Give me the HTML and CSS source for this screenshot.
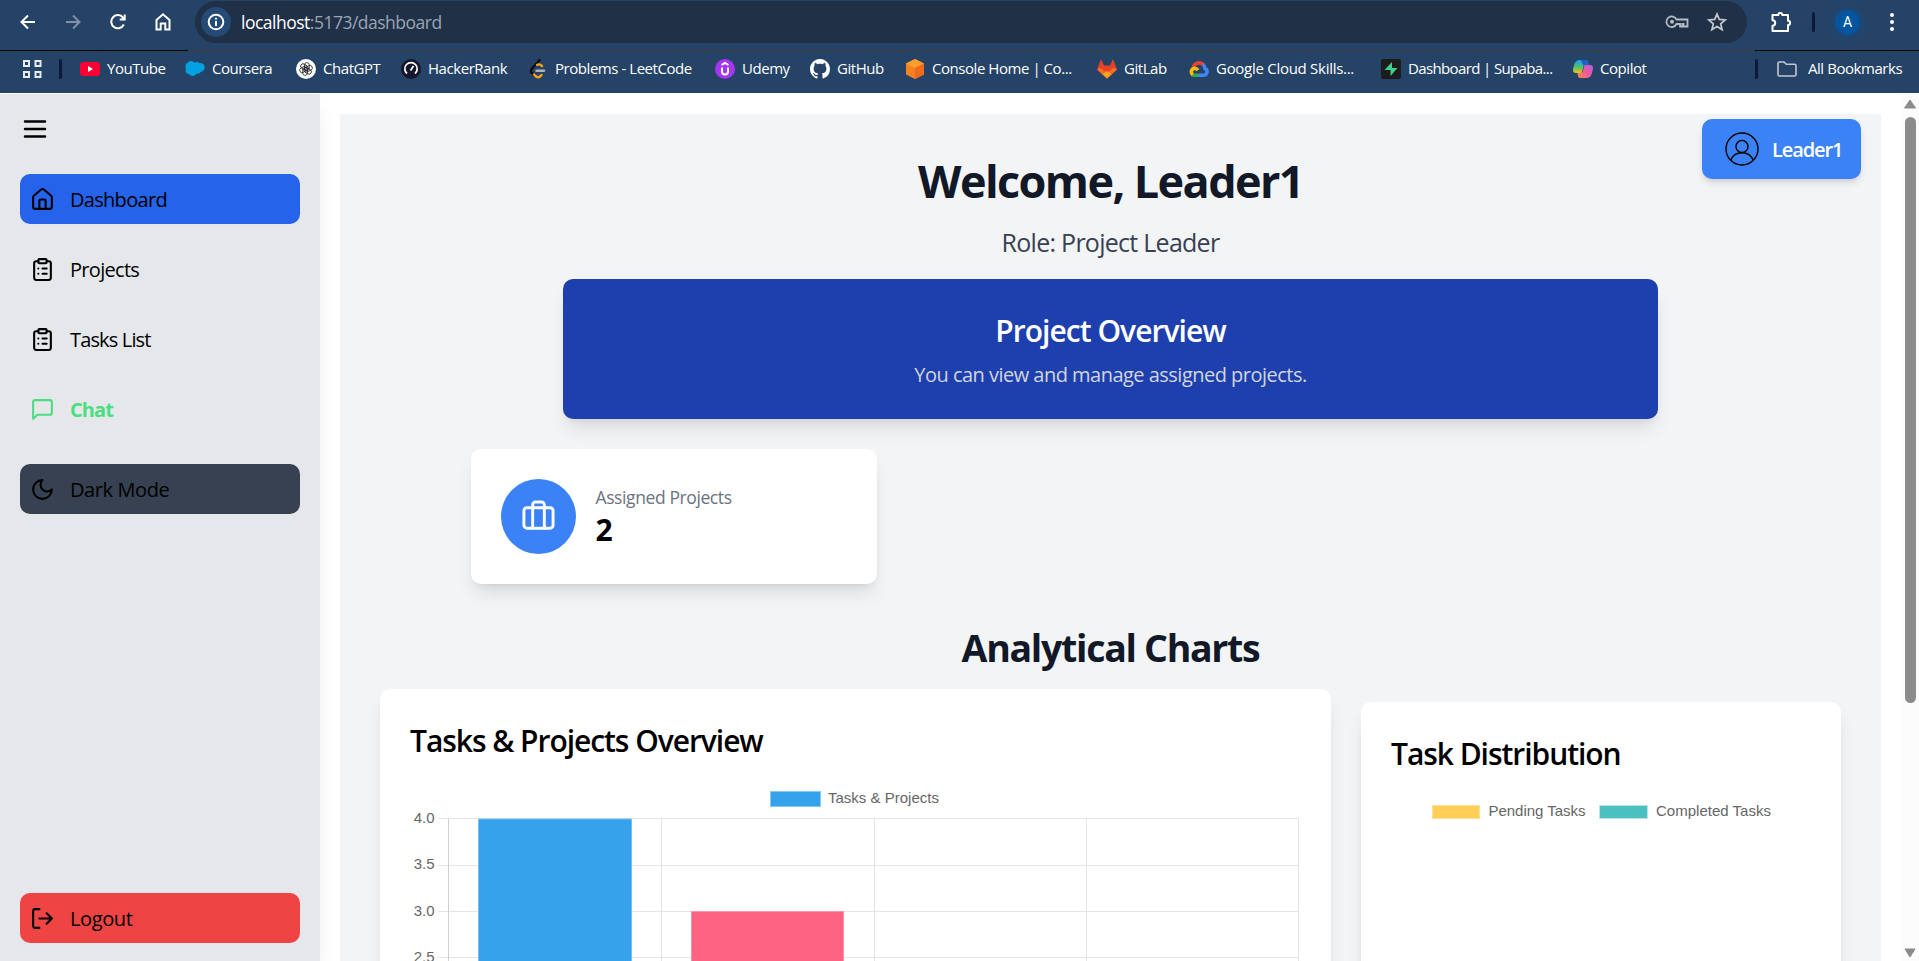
FILE: index.html
```html
<!DOCTYPE html>
<html lang="en">
<head>
<meta charset="utf-8">
<title>Dashboard</title>
<link rel="stylesheet" href="styles.css">
</head>
<body>
<header class="browser">
  <div class="toolbar">
    <div class="nav-icons">
      <svg width="20" height="20" viewBox="0 0 20 20" class="line white"><path d="M17 10H4M10 3.500L3.500 10l6.500 6.500"/></svg>
      <svg width="20" height="20" viewBox="0 0 20 20" class="line dim"><path d="M3 10h13M10 3.500L16.500 10 10 16.500"/></svg>
      <svg width="20" height="20" viewBox="0 0 20 20" class="line white"><path d="M15.800 12.500A6.600 6.600 0 1 1 15 5.600l1.500 1.600M16.700 2.500v5h-5"/></svg>
      <svg width="20" height="20" viewBox="0 0 20 20" class="line white"><path d="M3.500 8L10 2.300 16.500 8v9.500H12.300v-6H7.700v6H3.500z"/></svg>
    </div>
    <div class="omnibox">
      <span class="info"><svg width="20" height="20" viewBox="0 0 20 20" class="line white"><circle cx="10" cy="10" r="7.300"/><path d="M10 9v5M10 5.800v1.800"/></svg></span>
      <span class="url"><b>localhost</b>:5173/dashboard</span>
      <svg class="key" width="24" height="16" viewBox="0 0 24 16"><path d="M11.500 5.500A5.300 5.300 0 1 0 11.500 10H15v2.500h2.300V10h1.200v2.500H22.500V5.500z" fill="none" stroke="#b6bcc5" stroke-width="1.800"/><circle cx="7" cy="7.800" r="2" fill="#b6bcc5"/></svg>
      <svg width="20" height="20" viewBox="0 0 20 20"><path d="M10 2l2.300 5.400 5.900.5-4.500 3.900 1.400 5.800L10 14.500l-5.100 3.100 1.400-5.800L1.800 7.900l5.900-.5z" fill="none" stroke="#c3c7cd" stroke-width="1.700"/></svg>
    </div>
    <div class="tools">
      <svg width="24" height="24" viewBox="0 0 24 24" class="line white"><path d="M3.500 5h5.800a2 2 0 0 1 4 0H19v5.800a2 2 0 0 1 0 4.200v6H3.500v-5.300a2.700 2.700 0 0 0 0-5.400z" stroke-linejoin="round"/></svg>
      <i class="sep"></i>
      <span class="avatar">A</span>
      <svg width="8" height="20" viewBox="0 0 8 20" fill="#fff"><circle cx="4" cy="3" r="2"/><circle cx="4" cy="10" r="2"/><circle cx="4" cy="17" r="2"/></svg>
    </div>
  </div>
  <div class="edge"></div>
  <div class="bookmarks">
    <svg class="apps" width="20" height="20" viewBox="0 0 20 20" fill="none" stroke="#e6ebf2" stroke-width="2"><path d="M1 2h5v5H1zM12.500 2h5v5h-5zM1 13h5v5H1zM12.500 13h5v5h-5z"/></svg>
    <i class="sep"></i>
    <div class="marks">
      <a><svg viewBox="0 0 20 20"><rect y="3" width="20" height="14" rx="3.500" fill="#ff0033"/><path d="M8 7l5 3-5 3z" fill="#fff"/></svg><span>YouTube</span></a>
      <a><svg viewBox="0 0 20 20"><path d="M3 3.500a4.300 4.300 0 0 1 6.500.2 4.500 4.500 0 0 1 5 .3 4.400 4.400 0 1 1 1.500 8.800 4 4 0 0 1-4.500 1.700 4.300 4.300 0 0 1-7.300.8A3.600 3.600 0 0 1 1 10 4.500 4.500 0 0 1 3 3.500z" fill="#00a1e0"/></svg><span>Coursera</span></a>
      <a><svg viewBox="0 0 20 20"><circle cx="10" cy="10" r="10" fill="#fff"/><g fill="none" stroke="#222" stroke-width=".8"><rect x="8.500" y="3.600" width="4.800" height="8" rx="2.400"/><rect x="8.500" y="3.600" width="4.800" height="8" rx="2.400" transform="rotate(60 10 10)"/><rect x="8.500" y="3.600" width="4.800" height="8" rx="2.400" transform="rotate(120 10 10)"/><rect x="8.500" y="3.600" width="4.800" height="8" rx="2.400" transform="rotate(180 10 10)"/><rect x="8.500" y="3.600" width="4.800" height="8" rx="2.400" transform="rotate(240 10 10)"/><rect x="8.500" y="3.600" width="4.800" height="8" rx="2.400" transform="rotate(300 10 10)"/></g></svg><span>ChatGPT</span></a>
      <a><svg viewBox="0 0 20 20"><circle cx="10" cy="10" r="10" fill="#15182b"/><path d="M6 14.500a6.200 6.200 0 1 1 8 0M9.500 11.500l3-4.500" fill="none" stroke="#fff" stroke-width="1.700"/></svg><span>HackerRank</span></a>
      <a><svg viewBox="0 0 20 20" fill="none" stroke-width="2.400" stroke-linecap="round"><path d="M11.500 1.200L3.800 9.800q-1.600 2 0 4l2.200 2.300" stroke="#0a0a0a"/><path d="M9 5.800q3-1.300 5 1.200M6 15.500l2 2q3 2 5.500-1.500" stroke="#ffa116"/><path d="M8.500 11.700h7.500" stroke="#b3b3b3"/></svg><span>Problems - LeetCode</span></a>
      <a><svg viewBox="0 0 20 20"><circle cx="10" cy="10" r="10" fill="#a435f0"/><path d="M6.500 6L10 4l3.500 2M7 8.500v4a3 3 0 0 0 6 0v-4" fill="none" stroke="#fff" stroke-width="2"/></svg><span>Udemy</span></a>
      <a><svg viewBox="0 0 16 16"><path fill="#fff" d="M8 0C3.580 0 0 3.580 0 8c0 3.540 2.290 6.530 5.470 7.590.4.070.55-.17.55-.38 0-.19-.010-.820-.010-1.490-2.010.37-2.530-.49-2.690-.94-.090-.23-.48-.94-.82-1.130-.28-.15-.68-.52-.010-.53.63-.010 1.080.58 1.230.82.72 1.210 1.870.87 2.330.66.070-.52.28-.87.51-1.070-1.780-.2-3.640-.89-3.640-3.950 0-.87.31-1.590.82-2.150-.080-.2-.36-1.020.080-2.120 0 0 .67-.21 2.200.82.64-.18 1.320-.27 2-.27s1.360.090 2 .27c1.530-1.040 2.200-.82 2.200-.82.44 1.100.16 1.920.080 2.120.51.56.82 1.270.82 2.150 0 3.070-1.870 3.750-3.650 3.950.29.25.54.73.54 1.480 0 1.070-.010 1.930-.010 2.200 0 .21.15.46.55.38A8 8 0 0 0 16 8c0-4.420-3.580-8-8-8z"/></svg><span>GitHub</span></a>
      <a><svg viewBox="0 0 20 20"><path d="M10 0l9 4.500v11L10 20l-9-4.500v-11z" fill="#f58220"/><path d="M10 0l9 4.500L10 9 1 4.500z" fill="#ff9d2e"/><path d="M10 9l9-4.500v11L10 20z" fill="#ef6a1c"/></svg><span>Console Home | Co...</span></a>
      <a><svg viewBox="0 0 20 20"><path d="M4 0l3 6.500h6L16 0l4 10.500-10 9-10-9z" fill="#e24329"/><path d="M0 10.500l3-1.800L10 14l7-5.300 3 1.800-10 9z" fill="#fc6d26"/><path d="M5.500 15.200L10 12l4.500 3.200L10 19.500z" fill="#fca326"/></svg><span>GitLab</span></a>
      <a class="cloud"><svg viewBox="0 0 20 20" fill="none" stroke-width="3.600"><path d="M4.500 8A5.800 5.800 0 0 1 14.500 6" stroke="#ea4335"/><path d="M14 5.500q2 1.500 2 4.200a3.400 3.400 0 0 1-1 6.500H10" stroke="#4285f4"/><path d="M10 16.200H5.500q-1.500 0-2.300-.8" stroke="#34a853"/><path d="M3.800 15.800a3.700 3.700 0 0 1 1.700-6.600q2 0 3.500 2" stroke="#fbbc05"/></svg><span>Google Cloud Skills...</span></a>
      <a class="supa"><svg viewBox="0 0 20 20"><rect width="20" height="20" rx="2" fill="#1c1c1c"/><path d="M11 3v6h5.500L9.500 17v-6H3.500z" fill="#3ecf8e"/></svg><span>Dashboard | Supaba...</span></a>
      <a><svg viewBox="0 0 20 20"><defs><linearGradient id="c1" x1="0" y1="0" x2="0" y2="1"><stop offset="0" stop-color="#1b9df0"/><stop offset=".55" stop-color="#52c06b"/><stop offset="1" stop-color="#f5c518"/></linearGradient><linearGradient id="c2" x1="1" y1="0" x2="0" y2="1"><stop offset="0" stop-color="#b45be8"/><stop offset=".5" stop-color="#f0589c"/><stop offset="1" stop-color="#ff8a45"/></linearGradient></defs><path d="M6 1h7q1.500 0 2 2l.6 3h-3q-1.600 0-2.100 1.600L8.500 14H3q-3 0-3-3 0-1.500 1.200-5.500T6 1z" fill="url(#c1)"/><path d="M14 19H7q-1.500 0-2-2l-.5-3h3q1.600 0 2.100-1.600L11.500 6H17q3 0 3 3 0 1.500-1.200 5.500T14 19z" fill="url(#c2)"/><path d="M8 1h5q1.500 0 2 2l.6 3h-3q-1.400 0-2 1.200z" fill="#1d5fd0"/></svg><span>Copilot</span></a>
    </div>
    <i class="sep"></i>
    <a class="all"><svg viewBox="0 0 20 20"><path d="M1 4.500Q1 3 2.500 3H7l2.300 2.300H17.500Q19 5.300 19 6.800V15.500Q19 17 17.500 17h-15Q1 17 1 15.500z" fill="none" stroke="#c4c8ce" stroke-width="1.600"/></svg><span>All Bookmarks</span></a>
  </div>
</header>
<div class="app">
  <aside class="sidebar">
    <svg class="ico menu" viewBox="0 0 24 24"><path d="M4 6h16M4 12h16M4 18h16"/></svg>
    <nav class="links">
      <a class="item active"><svg class="ico" viewBox="0 0 24 24"><path d="M15 21v-8a1 1 0 0 0-1-1h-4a1 1 0 0 0-1 1v8"/><path d="M3 10a2 2 0 0 1 .709-1.528l7-5.999a2 2 0 0 1 2.582 0l7 5.999A2 2 0 0 1 21 10v9a2 2 0 0 1-2 2H5a2 2 0 0 1-2-2z"/></svg><span>Dashboard</span></a>
      <a class="item"><svg class="ico" viewBox="0 0 24 24"><rect x="8" y="2" width="8" height="4" rx="1"/><path d="M16 4h2a2 2 0 0 1 2 2v14a2 2 0 0 1-2 2H6a2 2 0 0 1-2-2V6a2 2 0 0 1 2-2h2M12 11h4M12 16h4M8 11h.01M8 16h.01"/></svg><span>Projects</span></a>
      <a class="item tasks"><svg class="ico" viewBox="0 0 24 24"><rect x="8" y="2" width="8" height="4" rx="1"/><path d="M16 4h2a2 2 0 0 1 2 2v14a2 2 0 0 1-2 2H6a2 2 0 0 1-2-2V6a2 2 0 0 1 2-2h2M12 11h4M12 16h4M8 11h.01M8 16h.01"/></svg><span>Tasks List</span></a>
      <a class="item chat"><svg class="ico" viewBox="0 0 24 24"><path d="M21 15a2 2 0 0 1-2 2H7l-4 4V5a2 2 0 0 1 2-2h14a2 2 0 0 1 2 2z"/></svg><span>Chat</span></a>
    </nav>
    <a class="item dark"><svg class="ico" viewBox="0 0 24 24"><path d="M12 3a6 6 0 0 0 9 9 9 9 0 1 1-9-9Z"/></svg><span>Dark Mode</span></a>
    <a class="item logout"><svg class="ico" viewBox="0 0 24 24"><path d="M9 21H5a2 2 0 0 1-2-2V5a2 2 0 0 1 2-2h4M16 17l5-5-5-5M21 12H9"/></svg><span>Logout</span></a>
  </aside>
  <main class="content">
    <section class="board">
      <div class="user"><svg width="40" height="40" viewBox="-20 -20 40 40" fill="none" stroke="#000" stroke-width="1.400"><circle r="16"/><circle cy="-2.600" r="6"/><path d="M-11.300 11.500a12.100 12.100 0 0 1 22.600 0"/></svg><span>Leader1</span></div>
      <h1 class="welcome">Welcome, Leader1</h1>
      <p class="role">Role: Project Leader</p>
      <div class="overview">
        <h2>Project Overview</h2>
        <p>You can view and manage assigned projects.</p>
      </div>
      <div class="stats">
        <div class="stat">
          <span class="disc"><svg class="ico case" viewBox="0 0 24 24"><path d="M16 20V4a2 2 0 0 0-2-2h-4a2 2 0 0 0-2 2v16"/><rect x="2" y="6" width="20" height="14" rx="2"/></svg></span>
          <div><p class="stat-label">Assigned Projects</p><p class="stat-value">2</p></div>
        </div>
      </div>
      <h2 class="charts-title">Analytical Charts</h2>
      <div class="charts">
        <div class="card bars">
          <h3>Tasks &amp; Projects Overview</h3>
          <svg class="plot" width="891" height="320" viewBox="410 779 891 320">
            <rect x="770.500" y="791.500" width="50" height="15" fill="#36a2eb" stroke="#86c7f3"/>
            <text x="828" y="803" textLength="111">Tasks &amp; Projects</text>
            <g stroke="#e5e5e5">
              <path d="M438.500 818.500H1299M438.500 865.500H1299M438.500 911.500H1299M438.500 957.500H1299M438.500 1004.500H1299"/>
              <path d="M661.500 819V1099M874.500 819V1099M1086.500 819V1099M1298.500 819V1099"/>
              <path d="M448.500 819V1099" stroke="#cfcfcf"/>
            </g>
            <path d="M478.500 1099V819H631.500V1099" fill="#36a2eb" stroke="#72bff1"/>
            <path d="M691.500 1099V911.500H843.500V1099" fill="#ff6384" stroke="#ff92a9"/>
            <g text-anchor="end"><text x="434.500" y="823">4.0</text><text x="434.500" y="869">3.5</text><text x="434.500" y="916">3.0</text><text x="434.500" y="962">2.5</text></g>
          </svg>
        </div>
        <div class="card share">
          <h3>Task Distribution</h3>
          <svg class="plot" width="420" height="307" viewBox="1391 792 420 307">
            <rect x="1432.500" y="805.500" width="47" height="13" fill="#ffce56" stroke="#ffe09a"/>
            <text x="1488.500" y="816" textLength="97">Pending Tasks</text>
            <rect x="1599.500" y="805.500" width="48" height="13" fill="#4bc0c0" stroke="#b7e6e6"/>
            <text x="1656" y="816" textLength="115">Completed Tasks</text>
          </svg>
        </div>
      </div>
    </section>
  </main>
  <div class="scrollbar">
    <svg width="14" height="10" viewBox="0 0 14 10"><path d="M7 1l5.500 8h-11z" fill="#8b8b8b" stroke="#8b8b8b" stroke-linejoin="round"/></svg>
    <i class="thumb"></i>
    <svg class="down" width="14" height="10" viewBox="0 0 14 10"><path d="M7 9l5-8H2z" fill="#8b8b8b" stroke="#8b8b8b" stroke-linejoin="round"/></svg>
  </div>
</div>
</body>
</html>
```
FILE: styles.css
```css
* { box-sizing: border-box; margin: 0; padding: 0; }
html, body { height: 100%; overflow: hidden; }
body { display: flex; flex-direction: column; background: #fff; color: #000; font: 20px/30px "Open Sans", "Noto Sans", sans-serif; }
svg { display: block; flex: none; }
.browser { height: 93px; flex: none; background: #254267; color: #fff; font-size: 15px; line-height: 20px; }
.toolbar { display: flex; height: 50px; padding-top: 1px; align-items: flex-start; }
.line { fill: none; stroke-width: 2; }
.white { stroke: #fff; }
.dim { stroke: #7f90a8; }
.nav-icons { display: flex; gap: 25px; width: 195px; padding: 11px 0 0 18px; }
.omnibox { display: flex; align-items: center; width: 1552px; height: 42px; padding: 0 20px 0 6px; border-radius: 21px; background: #203047; }
.info { display: grid; place-items: center; width: 30px; height: 30px; border-radius: 50%; background: #254a75; }
.url { flex: 1; margin-left: 10px; font-size: 17.500px; color: #9aa5b4; letter-spacing: -.5px; }
.url b { font-weight: 400; color: #fff; }
.key { margin-right: 18px; }
.tools { display: flex; align-items: center; height: 42px; padding-left: 22px; }
.sep { width: 3px; height: 20px; border-radius: 2px; background: #0b1a3a; }
.tools .sep { margin-left: 19px; }
.avatar { display: grid; place-items: center; width: 25px; height: 25px; margin: 0 28px 0 20px; border-radius: 50%; background: #04559f; box-shadow: 0 0 0 6px #22456e; font: 14px/25px Roboto, sans-serif; }
.edge { height: 1px; background: linear-gradient(90deg, #000 188px, #403c3b 188px, #403c3b 1755px, #000 1755px); }
.bookmarks { display: flex; align-items: center; height: 36px; padding-left: 23px; }
.apps { margin-right: 16px; }
.marks { display: grid; grid-template-columns: 105px 111px 105px 127px 187px 95px 95px 192px 92px 192px 192px 162px; margin-left: 18px; }
.marks a, .all { display: flex; align-items: center; gap: 7px; white-space: nowrap; letter-spacing: -.45px; }
.marks .cloud { letter-spacing: -.28px; }
.marks .supa { letter-spacing: -.63px; }
.marks svg, .all svg { width: 20px; height: 20px; }
.marks span, .all span { padding-bottom: 2px; }
.marks + .sep { margin-left: 20px; }
.all { margin-left: 19px; gap: 11px; }
.app { display: flex; flex: 1; min-height: 0; padding-top: 1px; }
.sidebar { display: flex; flex-direction: column; width: 320px; flex: none; padding: 20px 20px 18px; background: #e5e7eb; box-shadow: 0 12px 19px -4px rgba(0,0,0,.1); letter-spacing: -.7px; }
.ico { width: 25px; height: 25px; fill: none; stroke: currentColor; stroke-width: 2; stroke-linecap: round; stroke-linejoin: round; }
.menu { width: 30px; height: 30px; margin-bottom: 30px; }
.links { display: flex; flex-direction: column; gap: 20px; margin-bottom: 30px; }
.item { display: flex; align-items: center; gap: 15px; height: 50px; padding: 0 10px; border-radius: 10px; }
.item span, .user span { padding-top: 2px; }
.active { background: #2563eb; }
.tasks { letter-spacing: -.85px; }
.chat { color: #4ade80; font-weight: 700; letter-spacing: -.9px; }
.dark { background: #374151; letter-spacing: -.4px; }
.logout { margin-top: auto; background: #ef4444; letter-spacing: -.4px; }
.content { flex: 1; min-width: 0; padding: 20px 20px 0; overflow: hidden; }
.board { position: relative; min-height: 1100px; padding: 41px 40px 40px; background: #f3f4f6; }
.user { position: absolute; top: 5px; right: 20px; display: flex; align-items: center; gap: 10px; width: 159px; height: 60px; padding-left: 20px; border-radius: 10px; background: #3b82f6; color: #fff; font-weight: 600; letter-spacing: -1.1px; box-shadow: 0 5px 8px -1px rgba(0,0,0,.1), 0 3px 5px -2px rgba(0,0,0,.1); }
.welcome { padding-top: 1px; font-size: 45px; line-height: 50px; font-weight: 700; letter-spacing: -1.6px; text-align: center; color: #111827; margin-bottom: 19px; }
.role { font-size: 25px; line-height: 35px; letter-spacing: -.73px; text-align: center; color: #374151; margin-bottom: 19px; }
.overview, .stat, .card { border-radius: 10px; box-shadow: 0 13px 19px -4px rgba(0,0,0,.1), 0 5px 8px -5px rgba(0,0,0,.1); }
.overview { width: 1095px; height: 140px; margin: 0 auto 30px; padding: 32px 30px 28px; text-align: center; background: #1e40af; color: #d1d5db; letter-spacing: -.52px; }
.overview h2 { margin-bottom: 9px; font-size: 30px; line-height: 40px; font-weight: 600; color: #fff; letter-spacing: -.95px; }
.stats { display: grid; grid-template-columns: repeat(3, 406px); gap: 30px; width: 1280px; margin: 0 auto 40px; }
.stat { display: flex; align-items: center; gap: 20px; height: 135px; padding: 30px; background: #fff; }
.stat > div { padding-top: 2px; }
.disc { display: grid; place-items: center; width: 75px; height: 75px; border-radius: 50%; background: #3b82f6; color: #fff; }
.case { width: 35px; height: 35px; }
.stat-label { font-size: 17.500px; line-height: 25px; color: #6b7280; letter-spacing: -.4px; }
.stat-value { font-size: 30px; line-height: 40px; font-weight: 700; }
.charts-title { padding-top: 1px; margin-bottom: 19px; font-size: 37.500px; line-height: 45px; font-weight: 700; letter-spacing: -1.3px; text-align: center; color: #111827; }
.charts { display: grid; grid-template-columns: 951px 480px; gap: 30px; }
.card { padding: 32px 30px 30px; background: #fff; }
.share { margin-top: 13px; }
.card h3 { margin-bottom: 18px; font-size: 30px; line-height: 40px; font-weight: 600; letter-spacing: -1.05px; }
.plot text { font: 15px "Liberation Sans", Arial, sans-serif; fill: #666; }
.scrollbar { display: flex; flex-direction: column; align-items: center; width: 18px; flex: none; padding: 5px 0 3px; background: #fcfcfc; }
.thumb { width: 11px; height: 586px; margin-top: 8px; border-radius: 6px; background: #8b8b8b; }
.down { margin-top: auto; }
```
